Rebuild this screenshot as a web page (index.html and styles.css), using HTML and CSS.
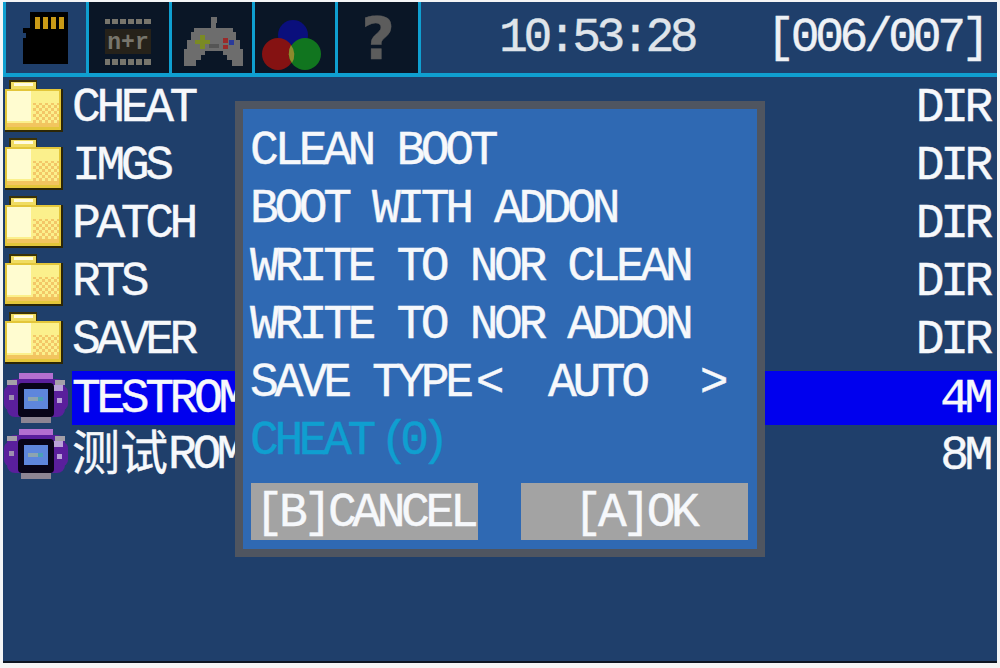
FILE: index.html
```html
<!DOCTYPE html>
<html lang="en">
<head>
    <meta charset="UTF-8">
    <meta name="viewport" content="width=device-width, initial-scale=1.0">
    <title>File browser</title>
    <link rel="stylesheet" href="styles.css">
</head>
<body>
    <svg class="defs" width="0" height="0">
        <symbol id="folder" viewBox="0 0 60 56">
            <rect x="6" y="2" width="28" height="12" fill="#3a3208"/>
            <rect x="8" y="4" width="25" height="9" fill="#f0dc62"/>
            <rect x="11" y="5" width="19" height="3" fill="#fffbe0"/>
            <rect x="2" y="11" width="58" height="43" fill="#2c2606"/>
            <rect x="2" y="11" width="56" height="41" fill="#e3c63a"/>
            <rect x="4" y="13" width="52" height="36" fill="#fbf08c"/>
            <rect x="4" y="13" width="24" height="30" fill="#fffcd0"/>
            <rect x="30" y="25" width="26" height="24" fill="url(#dither)"/>
            <rect x="4" y="45" width="52" height="4" fill="#f2c55f"/>
            <pattern id="dither" width="6" height="6" patternUnits="userSpaceOnUse">
                <rect width="3" height="3" fill="#f3c768"/>
                <rect x="3" y="3" width="3" height="3" fill="#f3c768"/>
            </pattern>
        </symbol>
        <symbol id="gba" viewBox="0 0 66 54">
            <rect x="16" y="2" width="34" height="9" fill="#b36fd0"/>
            <rect x="4" y="8" width="58" height="38" rx="8" fill="#5a1f9c"/>
            <rect x="1" y="15" width="64" height="24" rx="6" fill="#5a1f9c"/>
            <rect x="18" y="46" width="30" height="6" fill="#8d8593"/>
            <rect x="4" y="9" width="10" height="5" fill="#a4a0a8"/>
            <rect x="52" y="9" width="10" height="5" fill="#a4a0a8"/>
            <rect x="50" y="14" width="10" height="6" fill="#b9a2d8"/>
            <rect x="6" y="24" width="5" height="5" fill="#9e8fb0"/>
            <rect x="54" y="27" width="5" height="5" fill="#b9a2d8"/>
            <rect x="15" y="12" width="36" height="34" rx="4" fill="#080418"/>
            <rect x="21" y="18" width="24" height="20" fill="#5e86dc"/>
            <rect x="25" y="26" width="10" height="4" fill="#8da4b0"/>
            <rect x="35" y="26" width="5" height="4" fill="#4aa0b8"/>
        </symbol>
    </svg>

    <div class="screen">
        <header class="topbar">
            <div class="tab tab-on">
                <svg viewBox="0 0 80 70" width="80" height="70">
                    <path d="M18 10H62V62H17V36H20V31H17V26H24V10Z" fill="#000"/>
                    <rect x="29" y="15" width="5" height="12" fill="#c99a16"/>
                    <rect x="37" y="15" width="5" height="12" fill="#c99a16"/>
                    <rect x="45" y="15" width="5" height="12" fill="#c99a16"/>
                    <rect x="53" y="15" width="5" height="12" fill="#c99a16"/>
                </svg>
            </div>
            <div class="tab">
                <svg viewBox="0 0 80 70" width="80" height="70">
                    <path d="M16 17h46v5H16zM16 57h46v6H16z" fill="#77756c"/>
                    <path d="M22 17v5M30 17v5M38 17v5M46 17v5M54 17v5M22 57v6M30 57v6M38 57v6M46 57v6M54 57v6" stroke="#0a1626" stroke-width="2"/>
                    <rect x="16" y="27" width="46" height="25" fill="#26221a"/>
                    <text class="chip" x="39" y="47" text-anchor="middle">n+r</text>
                </svg>
            </div>
            <div class="tab">
                <svg viewBox="0 0 80 70" width="80" height="70">
                    <path d="M39 15h6v6h-1v5h17v4h3v8h4v9h3v17H60v-6h-5v-5h-4v-4H33v4h-4v5h-5v6H12V47h3v-9h4v-8h3v-4h17z" fill="#6d6d6d"/>
                    <path d="M23 38h5v-5h5v5h5v4h-5v5h-5v-5h-5z" fill="#7a8a24"/>
                    <rect x="51" y="36" width="5" height="5" fill="#9a2a2a"/>
                    <rect x="57" y="38" width="5" height="5" fill="#2a3a9a"/>
                    <rect x="51" y="43" width="5" height="4" fill="#9a2a2a"/>
                    <rect x="37" y="42" width="10" height="4" fill="#555"/>
                </svg>
            </div>
            <div class="tab">
                <svg viewBox="0 0 80 70" width="80" height="70">
                    <circle cx="38" cy="33" r="15" fill="#0a0f7c"/>
                    <circle cx="23" cy="52" r="16" fill="#851212"/>
                    <circle cx="50" cy="52" r="16" fill="#11751f"/>
                    <path d="M36 43a16 16 0 0 1 1 18a16 16 0 0 1-1-18z" fill="#8d8a2c"/>
                </svg>
            </div>
            <div class="tab tab-help">?</div>
            <div class="clock">10:53:28</div>
            <div class="count">[006/007]</div>
        </header>

        <main class="list">
            <div class="row"><svg class="ico"><use href="#folder"/></svg><span class="name">CHEAT</span><span class="size">DIR</span></div>
            <div class="row"><svg class="ico"><use href="#folder"/></svg><span class="name">IMGS</span><span class="size">DIR</span></div>
            <div class="row"><svg class="ico"><use href="#folder"/></svg><span class="name">PATCH</span><span class="size">DIR</span></div>
            <div class="row"><svg class="ico"><use href="#folder"/></svg><span class="name">RTS</span><span class="size">DIR</span></div>
            <div class="row"><svg class="ico"><use href="#folder"/></svg><span class="name">SAVER</span><span class="size">DIR</span></div>
            <div class="row row-sel"><svg class="ico ico-gba"><use href="#gba"/></svg><span class="name">TESTROM</span><span class="size">4M</span></div>
            <div class="row"><svg class="ico ico-gba"><use href="#gba"/></svg><span class="name"><span class="cjk">测试</span>ROM</span><span class="size">8M</span></div>
        </main>

        <!-- Popup over the list -->
        <div class="popup">
            <div class="popup-item">CLEAN BOOT</div>
            <div class="popup-item">BOOT WITH ADDON</div>
            <div class="popup-item">WRITE TO NOR CLEAN</div>
            <div class="popup-item">WRITE TO NOR ADDON</div>
            <div class="popup-item save-type"><span>SAVE TYPE</span><span class="save-prev">&lt;</span><span class="save-val">AUTO</span><span>&gt;</span></div>
            <div class="popup-item popup-off">CHEAT<span class="cheat-num">(0)</span></div>
            <div class="popup-btns">
                <div class="btn">[B]CANCEL</div>
                <div class="btn">[A]OK</div>
            </div>
        </div>
    </div>
</body>
</html>
```

FILE: styles.css
```css
html, body {
    margin: 0;
    padding: 0;
    background: #f4f5f6;
}
body {
    width: 1000px;
    height: 668px;
    overflow: hidden;
    padding: 2px 3px 5px 3px;
    box-sizing: border-box;
    font-family: "Liberation Mono", "Noto Sans CJK SC", monospace;
    font-size: 48px;
    letter-spacing: -4.4px;
    -webkit-text-stroke: 0.4px currentColor;
    color: #f6f8fb;
}
.defs {
    position: absolute;
}
.screen {
    position: relative;
    height: 100%;
    background: #1f3f6b;
    border-bottom: 2px solid #0c1522;
    box-sizing: border-box;
    overflow: hidden;
}
.topbar {
    display: flex;
    align-items: center;
    height: 75px;
    border-bottom: 4px solid #0f9fd0;
    box-sizing: border-box;
}
.tab {
    width: 80px;
    height: 100%;
    background: #0a1626;
    border-right: 3px solid #0f9fd0;
    flex: none;
}
.tab:first-child {
    border-left: 3px solid #0f9fd0;
}
.tab-on {
    background: #1f3f6b;
}
.tab svg {
    display: block;
}
.tab-help {
    font-family: "DejaVu Sans", sans-serif;
    font-size: 58px;
    font-weight: bold;
    letter-spacing: 0;
    line-height: 74px;
    text-align: center;
    color: #5c5c5c;
}
.chip {
    font-family: "Liberation Mono", monospace;
    font-size: 23px;
    font-weight: bold;
    letter-spacing: 0;
    fill: #77756c;
}
.clock {
    margin-left: 78px;
    color: #dfe4ea;
}
.count {
    margin-left: auto;
    margin-right: 11px;
    color: #eef1f5;
}
.list {
    display: flex;
    flex-direction: column;
}
.row {
    display: flex;
    align-items: center;
    height: 58px;
    padding-right: 8px;
}
.ico {
    width: 60px;
    height: 56px;
    margin: 0 9px 0 0;
    flex: none;
}
.ico-gba {
    width: 66px;
    height: 54px;
    margin-right: 3px;
}
.name {
    flex: 1;
    white-space: nowrap;
}
.name,
.size {
    line-height: 50px;
    padding-top: 4px;
}
.cjk {
    font-size: 48px;
    letter-spacing: 0;
    vertical-align: -2px;
}
.row-sel {
    align-items: flex-end;
}
.row-sel .name,
.row-sel .size {
    background: #0000ee;
    line-height: 52px;
    padding-top: 2px;
}
.row-sel .size {
    padding-right: 8px;
    margin-right: -8px;
}
.popup {
    position: absolute;
    left: 232px;
    top: 99px;
    width: 530px;
    height: 456px;
    box-sizing: border-box;
    border: 8px solid #4f5560;
    background: #2f69b3;
    padding: 13px 8px 0 7px;
}
.popup-item {
    height: 58px;
    line-height: 58px;
    white-space: nowrap;
}
.popup-off {
    color: #0f9fd0;
}
.cheat-num {
    margin-left: 8px;
    letter-spacing: -8.5px;
}
.save-type {
    display: flex;
}
.save-prev {
    margin-left: 6px;
}
.save-val {
    margin: 0 54px 0 48px;
}
.popup-btns {
    display: flex;
    justify-content: space-between;
    width: 497px;
    margin: 13px 0 0 1px;
}
.btn {
    width: 227px;
    height: 57px;
    line-height: 60px;
    background: #a3a3a3;
    text-align: center;
}
```
